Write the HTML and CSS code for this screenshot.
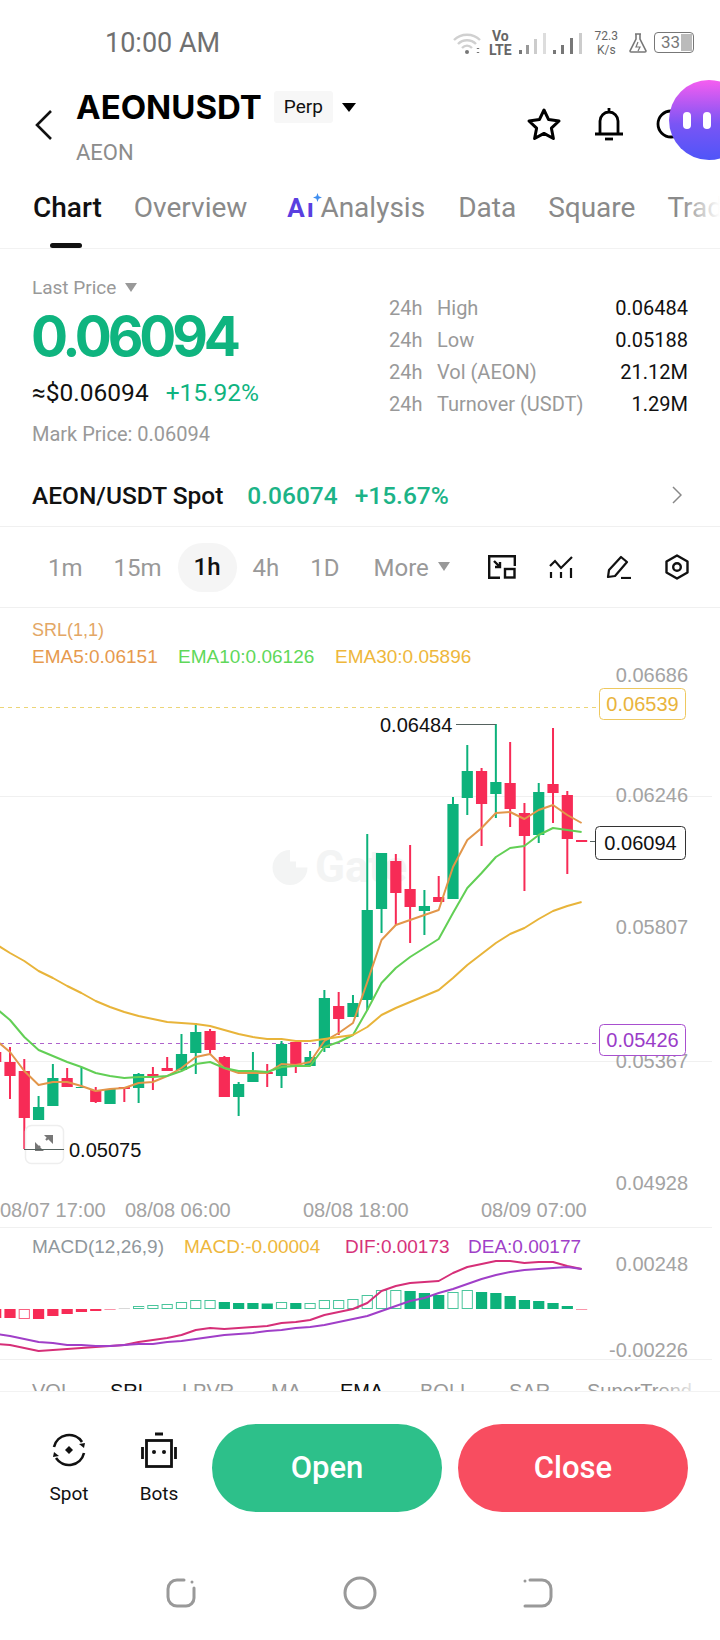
FILE: index.html
```html
<!DOCTYPE html>
<html>
<head>
    <meta charset="utf-8"/>
    <title>AEONUSDT Perp</title>
    <link rel="stylesheet" href="styles.css">
</head>

<body>
<div class="page">
    <div class="status">
        <span class="clock">10:00 AM</span>
        <div class="status-right">
            <svg class="wifi" width="28" height="24" viewBox="0 0 28 24" fill="none" stroke="#d0d0d0" stroke-width="2.4">
                <path d="M1 9c7-7 19-7 26 0"/>
                <path d="M5 13c5-5 13-5 18 0"/>
                <path d="M9 17c3-3 7-3 10 0"/>
                <circle cx="14" cy="21" r="2" fill="#777" stroke="none"/>
                <path d="M25 17v1M25 21v1" stroke="#777"/>
            </svg>
            <div class="volte"><span>Vo</span><span>LTE</span></div>
            <svg class="bars" width="64" height="22" viewBox="0 0 64 22">
                <rect x="0" y="18" width="3" height="4" fill="#777"/>
                <rect x="7" y="13" width="3" height="9" fill="#999"/>
                <rect x="15" y="7" width="3" height="15" fill="#ccc"/>
                <rect x="24" y="1" width="3" height="21" fill="#ddd"/>
                <rect x="34" y="18" width="3" height="4" fill="#777"/>
                <rect x="42" y="13" width="3" height="9" fill="#777"/>
                <rect x="51" y="6" width="3" height="16" fill="#777"/>
                <rect x="60" y="1" width="3" height="21" fill="#ccc"/>
            </svg>
            <div class="speed"><span>72.3</span><span>K/s</span></div>
            <svg class="flask" width="18" height="20" viewBox="0 0 18 20" fill="none" stroke="#777" stroke-width="1.6">
                <path d="M6 1h6M7 1v5L1 18a1 1 0 0 0 1 1h14a1 1 0 0 0 1-1L11 6V1"/>
                <path d="M9 9l-2 5h4l-2 4" stroke-width="1.2"/>
            </svg>
            <div class="battery"><span class="battery-num">33</span><span class="battery-fill"></span></div>
        </div>
    </div>

    <div class="header">
        <svg class="back" width="18" height="30" viewBox="0 0 18 30" fill="none" stroke="#111" stroke-width="2.6">
            <path d="M16 1L2 15l14 14"/>
        </svg>
        <div class="title-box">
            <div class="title-row">
                <span class="symbol">AEONUSDT</span>
                <span class="chip">Perp</span>
                <span class="caret caret-black"></span>
            </div>
            <div class="coin">AEON</div>
        </div>
        <div class="header-icons">
            <svg width="36" height="34" viewBox="0 0 36 34" fill="none" stroke="#000" stroke-width="3" stroke-linejoin="round">
                <path d="M18 3l4.6 9.6 10.4 1.4-7.6 7.2 2 10.3L18 26.4 8.600 31.500l2-10.300L3 14l10.400-1.400z"/>
            </svg>
            <svg width="30" height="34" viewBox="0 0 30 34" fill="none" stroke="#000" stroke-width="2.800">
                <path d="M15 1v3M6 27V14a9 9 0 0 1 18 0v13M1 27h28"/>
                <path d="M11 32h8"/>
            </svg>
            <svg width="30" height="30" viewBox="0 0 30 30" fill="none" stroke="#000" stroke-width="2.800">
                <circle cx="15" cy="15" r="13"/>
            </svg>
        </div>
    </div>
    <div class="bubble"><span></span><span></span></div>

    <div class="tabs">
        <span class="tab tab-on">Chart</span>
        <span class="tab">Overview</span>
        <span class="tab tab-ai">
            <span class="ai-mark">A<span class="ai-i">ı</span>
                <svg class="ai-star" width="9" height="9" viewBox="0 0 10 10"><path d="M5 0l1.300 3.700L10 5 6.300 6.300 5 10 3.700 6.300 0 5l3.700-1.300z" fill="#3f8ef0"/></svg>
            </span>
            Analysis
        </span>
        <span class="tab">Data</span>
        <span class="tab">Square</span>
        <span class="tab">Trade</span>
        <span class="tab-line"></span>
        <span class="tab-fade"></span>
    </div>

    <div class="quote">
        <div class="quote-left">
            <div class="last-label">Last Price <span class="caret caret-grey"></span></div>
            <div class="big-price">0.06094</div>
            <div class="usd-row"><span class="usd">≈$0.06094</span><span class="green">+15.92%</span></div>
            <div class="mark">Mark Price: 0.06094</div>
        </div>
        <div class="stats">
            <span class="stat-k">24h</span><span class="stat-n">High</span><span class="stat-v">0.06484</span>
            <span class="stat-k">24h</span><span class="stat-n">Low</span><span class="stat-v">0.05188</span>
            <span class="stat-k">24h</span><span class="stat-n">Vol (AEON)</span><span class="stat-v">21.12M</span>
            <span class="stat-k">24h</span><span class="stat-n">Turnover (USDT)</span><span class="stat-v">1.29M</span>
        </div>
    </div>

    <div class="spot-row">
        <span class="spot-name">AEON/USDT Spot</span>
        <span class="spot-price">0.06074</span>
        <span class="spot-price">+15.67%</span>
        <svg class="spot-arrow" width="10" height="18" viewBox="0 0 10 18" fill="none" stroke="#888" stroke-width="1.500">
            <path d="M1 1l8 8-8 8"/>
        </svg>
    </div>

    <div class="intervals">
        <span class="iv iv-1m">1m</span>
        <span class="iv iv-15m">15m</span>
        <span class="iv iv-on">1h</span>
        <span class="iv iv-4h">4h</span>
        <span class="iv iv-1d">1D</span>
        <span class="iv iv-more">More <span class="caret caret-grey"></span></span>
        <div class="tools">
            <svg width="28" height="24" viewBox="0 0 28 24" fill="none" stroke="#111" stroke-width="2.400">
                <path d="M12 22.800H1.200V1.200h25.600V11"/>
                <path d="M6 6l6 6M12 7v5H7"/>
                <rect x="17" y="14" width="9.500" height="8.500"/>
            </svg>
            <svg width="24" height="22" viewBox="0 0 24 22" fill="none" stroke="#111" stroke-width="2.200">
                <path d="M1 10l5-5 6 7L23 1"/>
                <path d="M2 16v6M12 16v6M22 12v10"/>
            </svg>
            <svg width="26" height="24" viewBox="0 0 26 24" fill="none" stroke="#111" stroke-width="2.200" stroke-linejoin="round">
                <path d="M3 15L15 2l6 5L9 21l-7 1z"/>
                <path d="M15 23h10"/>
            </svg>
            <svg width="24" height="26" viewBox="0 0 24 26" fill="none" stroke="#111" stroke-width="2.400" stroke-linejoin="round">
                <path d="M12 1.500l10.500 6v11l-10.500 6-10.500-6v-11z"/>
                <circle cx="12" cy="13" r="3.800"/>
            </svg>
        </div>
    </div>

    <div class="chart">
        <svg class="chart-svg" width="720" height="784" viewBox="0 608 720 784">
            <defs>
                <linearGradient id="fade-right">
                    <stop offset="0" stop-color="#fff" stop-opacity="0"/>
                    <stop offset="1" stop-color="#fff"/>
                </linearGradient>
            </defs>

            <!-- grid -->
            <g class="grid">
                <line x1="0" y1="796.500" x2="712" y2="796.500"/>
                <line x1="0" y1="1061.500" x2="712" y2="1061.500"/>
                <line x1="0" y1="1227.500" x2="712" y2="1227.500"/>
                <line x1="0" y1="1359.500" x2="712" y2="1359.500"/>
            </g>

            <!-- watermark -->
            <g class="watermark">
                <path d="M290 850a17.500 17.500 0 1 0 17.500 17.500H296v-6h-6z"/>
                <text x="315" y="882">Gate</text>
            </g>

            <text class="legend srl" x="32" y="636">SRL(1,1)</text>
            <text class="legend ema5" x="32" y="663">EMA5:0.06151</text>
            <text class="legend ema10" x="178" y="663">EMA10:0.06126</text>
            <text class="legend ema30" x="335" y="663">EMA30:0.05896</text>

            <g class="axis">
                <text x="688" y="682">0.06686</text>
                <text x="688" y="802">0.06246</text>
                <text x="688" y="934">0.05807</text>
                <text x="688" y="1068">0.05367</text>
                <text x="688" y="1190">0.04928</text>
                <text x="688" y="1271">0.00248</text>
                <text x="688" y="1357">-0.00226</text>
            </g>

            <line class="dash-gold" x1="0" y1="707.500" x2="599" y2="707.500"/>
            <line class="dash-purple" x1="0" y1="1043.500" x2="599" y2="1043.500"/>

            <g id="candles"></g>
            <g id="macd"></g>
            <g id="lines"></g>

            <!-- high and low -->
            <line class="mark-line" x1="456" y1="724.500" x2="496" y2="724.500"/>
            <text class="mark-text" x="380" y="732">0.06484</text>

            <rect class="expand" x="25.500" y="1125.500" width="38" height="38" rx="6"/>
            <path class="expand-arrow" d="M40 1146l-3.500 3.500M50 1136l-4 4"/>
            <path class="expand-head" d="M53 1135v9l-9-9zM35 1151v-9l9 9z"/>
            <line class="mark-line" x1="24" y1="1149.500" x2="64" y2="1149.500"/>
            <text class="mark-text" x="69" y="1157">0.05075</text>

            <!-- price tags -->
            <rect class="tag tag-gold" x="599.500" y="688.500" width="86" height="31" rx="4"/>
            <text class="tag-text gold" x="642.500" y="711">0.06539</text>
            <rect class="tag tag-purple" x="599.500" y="1024.500" width="86" height="31" rx="4"/>
            <text class="tag-text purple" x="642.500" y="1047">0.05426</text>
            <line class="mark-line" x1="590" y1="841.500" x2="595" y2="841.500"/>
            <rect class="tag tag-black" x="595.500" y="826.500" width="90" height="33" rx="4"/>
            <text class="tag-text black" x="640.500" y="850">0.06094</text>

            <g class="dates">
                <text x="0" y="1217">08/07 17:00</text>
                <text x="125" y="1217">08/08 06:00</text>
                <text x="303" y="1217">08/08 18:00</text>
                <text x="481" y="1217">08/09 07:00</text>
            </g>

            <text class="legend macd-name" x="32" y="1253">MACD(12,26,9)</text>
            <text class="legend macd-val" x="184" y="1253">MACD:-0.00004</text>
            <text class="legend dif-val" x="345" y="1253">DIF:0.00173</text>
            <text class="legend dea-val" x="468" y="1253">DEA:0.00177</text>

            <g class="ind">
                <text x="32" y="1398">VOL</text>
                <text class="ind-on" x="110" y="1398">SRL</text>
                <text x="182" y="1398">LPVR</text>
                <text x="271" y="1398">MA</text>
                <text class="ind-on" x="340" y="1398">EMA</text>
                <text x="420" y="1398">BOLL</text>
                <text x="509" y="1398">SAR</text>
                <text x="587" y="1398">SuperTrend</text>
            </g>
            <rect x="655" y="1375" width="50" height="17" fill="url(#fade-right)"/>
            <rect x="705" y="1375" width="15" height="17" fill="#fff"/>
        </svg>
    </div>

    <div class="actions">
        <div class="act">
            <svg width="36" height="36" viewBox="0 0 36 36" fill="none" stroke="#111" stroke-width="2.600">
                <path d="M3 15A15.500 15.500 0 0 1 31 10"/>
                <path d="M33 21A15.500 15.500 0 0 1 5 26"/>
                <path d="M34 11l-6 1 5 4zM2 25l6-1-5-4z" fill="#111" stroke="none"/>
                <path d="M18 14l4 4-4 4-4-4z" fill="#111" stroke="none"/>
            </svg>
            <span>Spot</span>
        </div>
        <div class="act">
            <svg width="36" height="36" viewBox="0 0 36 36" fill="none" stroke="#111" stroke-width="2.800">
                <path d="M14 2h8" stroke-width="3"/>
                <rect x="5.500" y="8.500" width="25" height="26"/>
                <path d="M1.500 15v12M34.500 15v12"/>
                <circle cx="13" cy="20" r="2" fill="#111" stroke="none"/>
                <circle cx="23" cy="20" r="2" fill="#111" stroke="none"/>
            </svg>
            <span>Bots</span>
        </div>
        <div class="btn btn-open">Open</div>
        <div class="btn btn-close">Close</div>
    </div>

    <div class="nav">
        <svg width="32" height="30" viewBox="0 0 32 30" fill="none" stroke="#999" stroke-width="3" stroke-linecap="round">
            <path d="M19 2h-7a9 9 0 0 0-9 9v8a9 9 0 0 0 9 9h9a8 8 0 0 0 8-8v-10"/>
            <circle cx="27" cy="4" r="1.500" fill="#999" stroke="none"/>
        </svg>
        <svg width="34" height="34" viewBox="0 0 34 34" fill="none" stroke="#999" stroke-width="3">
            <circle cx="17" cy="17" r="15"/>
        </svg>
        <svg width="30" height="30" viewBox="0 0 30 30" fill="none" stroke="#999" stroke-width="3" stroke-linecap="round">
            <path d="M7 2h12a9 9 0 0 1 9 9v8a9 9 0 0 1-9 9H2"/>
            <circle cx="2" cy="3" r="1.500" fill="#999" stroke="none"/>
        </svg>
    </div>
</div>
<script src="chart.js"></script>
</body>
</html>
```

FILE: styles.css
```css
* {
    margin: 0;
    padding: 0;
    box-sizing: border-box;
}
body {
    background: #fff;
    font-family: Roboto, "Liberation Sans", sans-serif;
    color: #111;
}
.page {
    position: relative;
    width: 720px;
    height: 1640px;
    overflow: hidden;
}

/* status bar */
.status {
    display: flex;
    align-items: center;
    justify-content: space-between;
    height: 82px;
    padding: 3px 26px 0 105px;
}
.clock {
    font-size: 27px;
    color: #707070;
}
.status-right {
    display: flex;
    align-items: center;
    gap: 7px;
}
.wifi {
    margin-right: 1px;
}
.volte, .speed {
    display: flex;
    flex-direction: column;
    align-items: center;
    color: #666;
    line-height: 14px;
}
.volte {
    font-size: 14px;
    font-weight: 700;
}
.speed {
    font-size: 12px;
    margin: 0 4px 0 5px;
}
.battery {
    position: relative;
    width: 40px;
    height: 21px;
    border: 1.5px solid #777;
    border-radius: 4px;
    font-size: 17px;
    line-height: 18px;
    color: #777;
    padding-left: 6px;
}
.battery-fill {
    position: absolute;
    top: 1px;
    bottom: 1px;
    right: 1px;
    width: 11px;
    background: #bbb;
}
.battery-num {
    position: relative;
    z-index: 1;
}

/* header */
.header {
    display: flex;
    height: 93px;
    padding-left: 35px;
}
.back {
    margin-top: 28px;
}
.title-box {
    margin-left: 23px;
}
.title-row {
    display: flex;
    align-items: center;
    height: 44px;
    margin-top: 3px;
}
.symbol {
    font-family: Inter, Roboto, sans-serif;
    font-size: 33px;
    font-weight: 700;
    color: #000;
}
.chip {
    margin-left: 12px;
    width: 59px;
    height: 32px;
    background: #f7f7f7;
    border-radius: 3px;
    font-size: 19px;
    line-height: 32px;
    text-align: center;
}
.caret {
    display: inline-block;
    width: 0;
    height: 0;
    border-left: 6px solid transparent;
    border-right: 6px solid transparent;
    border-top: 9px solid #999;
}
.caret-black {
    margin-left: 9px;
    border-left-width: 7px;
    border-right-width: 7px;
    border-top-color: #000;
}
.coin {
    margin-top: 11px;
    font-size: 22px;
    color: #8c8c8c;
}
.header-icons {
    display: flex;
    align-items: center;
    gap: 32px;
    position: absolute;
    top: 107px;
    left: 526px;
}
.bubble {
    position: absolute;
    top: 80px;
    left: 669px;
    width: 80px;
    height: 80px;
    border-radius: 40px;
    background: linear-gradient(#f65df0, #7a55f5 55%, #4f55f8);
    display: flex;
    align-items: center;
    gap: 12px;
    padding-left: 14px;
}
.bubble span {
    width: 8px;
    height: 17px;
    border-radius: 4px;
    background: #fff;
}

/* tabs */
.tabs {
    position: relative;
    display: flex;
    align-items: center;
    gap: 32px;
    height: 74px;
    padding: 0 0 8px 33px;
    border-bottom: 1px solid #f2f2f2;
    overflow: hidden;
}
.tab {
    font-size: 28px;
    color: #8a8a8a;
    white-space: nowrap;
    flex: none;
}
.tab-on {
    color: #111;
    font-weight: 500;
}
.tab-ai {
    margin-left: 8px;
    margin-right: 1px;
}
.ai-mark {
    position: relative;
    font-size: 26px;
    font-weight: 700;
    color: #5a3fe0;
}
.ai-i {
    margin-left: 2px;
}
.ai-star {
    position: absolute;
    top: 0;
    right: -2px;
}
.tab-line {
    position: absolute;
    left: 50px;
    bottom: 0;
    width: 32px;
    height: 5px;
    border-radius: 3px;
    background: #111;
}
.tab-fade {
    position: absolute;
    right: 0;
    top: 0;
    width: 40px;
    height: 72px;
    background: linear-gradient(90deg, rgba(255,255,255,0), #fff);
}

/* price block */
.quote {
    display: flex;
    height: 198px;
    padding: 0 32px;
}
.last-label {
    margin-top: 28px;
    font-size: 19px;
    line-height: 22px;
    color: #999;
}
.last-label .caret {
    margin-left: 4px;
    vertical-align: 2px;
}
.big-price {
    margin: 5px 0 0 -1px;
    font-family: Inter, Roboto, sans-serif;
    font-size: 55px;
    line-height: 64px;
    font-weight: 700;
    letter-spacing: -4.200px;
    color: #0fb47f;
}
.usd-row {
    display: flex;
    gap: 17px;
    margin-top: 11px;
    font-size: 24.500px;
    line-height: 28px;
}
.green {
    color: #0fb47f;
}
.mark {
    margin-top: 15px;
    font-size: 20px;
    line-height: 24px;
    color: #999;
}
.stats {
    display: grid;
    grid-template-columns: 48px 1fr auto;
    grid-auto-rows: 32px;
    align-items: center;
    align-content: start;
    width: 299px;
    margin-left: auto;
    padding-top: 43px;
    font-size: 20px;
}
.stat-k, .stat-n {
    color: #999;
}
.stat-v {
    text-align: right;
    color: #111;
}

/* spot row */
.spot-row {
    display: flex;
    align-items: center;
    height: 80px;
    padding: 17px 38px 0 32px;
    border-bottom: 1px solid #f0f0f0;
    font-size: 24.500px;
}
.spot-name {
    font-weight: 500;
    margin-right: 24px;
}
.spot-price {
    color: #1cb387;
    font-weight: 500;
    margin-right: 17px;
}
.spot-arrow {
    margin-left: auto;
}

/* interval row */
.intervals {
    position: relative;
    height: 81px;
    border-bottom: 1px solid #f0f0f0;
    display: flex;
    align-items: center;
    font-size: 24px;
    color: #999;
    padding: 1px 0 0 48px;
}
.iv {
    flex: none;
}
.iv-15m {
    margin-left: 31px;
}
.iv-on {
    margin-left: 16px;
    width: 59px;
    height: 49px;
    border-radius: 25px;
    background: #f5f5f5;
    color: #111;
    font-weight: 500;
    line-height: 49px;
    text-align: center;
}
.iv-4h {
    margin-left: 16px;
}
.iv-1d {
    margin-left: 31px;
}
.iv-more {
    margin-left: 34px;
}
.iv-more .caret {
    margin-left: 3px;
    vertical-align: 5px;
}
.tools {
    position: absolute;
    left: 488px;
    top: 0;
    bottom: 0;
    display: flex;
    align-items: center;
    gap: 33px;
}

/* chart */
.chart {
    height: 784px;
}
.chart-svg {
    display: block;
    font-family: "Liberation Sans", Arial, sans-serif;
}
.grid line {
    stroke: #f0f0f0;
    stroke-width: 1;
}
.watermark {
    fill: #f3f4f4;
}
.watermark text {
    font-size: 44px;
    font-weight: 700;
    font-family: Roboto, sans-serif;
}
.legend {
    font-size: 19px;
}
.srl {
    fill: #e3a765;
    font-size: 18px;
}
.ema5 {
    fill: #e69a4e;
}
.ema10 {
    fill: #5fd85a;
}
.ema30, .macd-val {
    fill: #eeb73b;
}
.macd-name {
    fill: #8f979c;
}
.dif-val {
    fill: #d6327a;
}
.dea-val {
    fill: #a03fc8;
}
.axis text {
    fill: #a3a3a3;
    font-size: 20px;
    text-anchor: end;
}
.dates text {
    fill: #a3a3a3;
    font-size: 20px;
}
.dash-gold {
    stroke: #ecd576;
    stroke-dasharray: 4 4;
}
.dash-purple {
    stroke: #ae63cc;
    stroke-dasharray: 4 4;
}
.mark-line {
    stroke: #55625f;
    stroke-width: 1;
}
.mark-text {
    font-size: 20px;
    fill: #111;
}
.expand {
    fill: rgba(255,255,255,0.6);
    stroke: #eeeeee;
    stroke-width: 1.500;
}
.expand-arrow {
    fill: none;
    stroke: #777;
    stroke-width: 2.200;
}
.expand-head {
    fill: #777;
}
.tag {
    fill: #fff;
    stroke-width: 1;
}
.tag-gold {
    stroke: #eec85f;
}
.tag-purple {
    stroke: #a84fcf;
}
.tag-black {
    stroke: #333;
}
.tag-text {
    font-size: 20px;
    text-anchor: middle;
}
.gold {
    fill: #e9b43c;
}
.purple {
    fill: #9a3cc8;
}
.black {
    fill: #111;
}
.ind text {
    fill: #999;
    font-size: 20px;
}
.ind .ind-on {
    fill: #111;
}

/* bottom actions */
.actions {
    position: relative;
    z-index: 1;
    height: 168px;
    margin-top: -1px;
    background: #fff;
    border-top: 1px solid #f2f2f2;
    display: flex;
    padding: 32px 32px 0 0;
}
.act {
    display: flex;
    flex-direction: column;
    align-items: center;
    width: 90px;
    height: 88px;
    font-size: 19px;
    gap: 14px;
    padding-top: 8px;
}
.act:first-child {
    margin-left: 24px;
}
.btn {
    width: 230px;
    height: 88px;
    border-radius: 44px;
    color: #fff;
    font-size: 31px;
    font-weight: 500;
    line-height: 88px;
    text-align: center;
}
.btn-open {
    margin-left: 8px;
    background: #2dc08a;
}
.btn-close {
    margin-left: 16px;
    background: #f84d60;
}

/* nav bar */
.nav {
    display: flex;
    align-items: center;
    height: 68px;
    padding: 0 167px 0 165px;
    justify-content: space-between;
}
```

FILE: chart.js
```js
var NS = 'http://www.w3.org/2000/svg';
var GREEN = '#0db27b';
var RED = '#f72b56';

function xAt(i) {
    return 10 + 14.29 * i;
}

function add(parent, tag, attrs) {
    var el = document.createElementNS(NS, tag);
    for (var k in attrs) {
        el.setAttribute(k, attrs[k]);
    }
    parent.appendChild(el);
    return el;
}

// [wick top, wick bottom, body top, body bottom, up?]
var candles = [
    [1052, 1062, 1052, 1062, 0], [1047, 1099, 1062, 1076, 0], [1059, 1149, 1071, 1118, 0],
    [1096, 1120, 1107, 1120, 1], [1064, 1106, 1078, 1106, 1], [1068, 1087, 1078, 1087, 0],
    [1067, 1088, 1087, 1088, 1], [1087, 1103, 1090, 1102, 0], [1089, 1104, 1089, 1104, 1],
    [1087, 1102, 1087, 1089, 0], [1073, 1103, 1074, 1088, 1], [1067, 1090, 1074, 1077, 0],
    [1057, 1071, 1068, 1071, 0], [1034, 1070, 1054, 1070, 1], [1023, 1074, 1032, 1053, 1],
    [1029, 1055, 1031, 1050, 0], [1056, 1097, 1057, 1097, 0], [1082, 1116, 1084, 1097, 1],
    [1052, 1082, 1073, 1082, 1], [1064, 1087, 1072, 1074, 0], [1041, 1088, 1044, 1076, 1],
    [1042, 1073, 1042, 1066, 0], [1051, 1066, 1057, 1066, 1], [990, 1052, 998, 1048, 1],
    [992, 1035, 1006, 1019, 0], [995, 1017, 1003, 1017, 1], [834, 1010, 910, 1000, 1],
    [853, 933, 853, 909, 1], [854, 925, 861, 893, 0], [845, 943, 889, 907, 0],
    [890, 935, 906, 911, 1], [876, 902, 897, 902, 0], [797, 899, 804, 899, 1],
    [745, 815, 771, 798, 1], [768, 846, 771, 804, 0], [724, 818, 782, 794, 1],
    [742, 827, 783, 809, 0], [803, 891, 813, 836, 0], [783, 843, 792, 835, 1],
    [728, 823, 784, 793, 0], [791, 874, 795, 839, 0], [840, 842, 840, 842, 0]
];

var gCandles = document.getElementById('candles');
candles.forEach(function (c, n) {
    var x = xAt(n - 1);
    var col = c[4] ? GREEN : RED;
    add(gCandles, 'rect', { x: x - 1, y: c[0], width: 2, height: c[1] - c[0], fill: col });
    add(gCandles, 'rect', { x: x - 5.6, y: c[2], width: 11.2, height: c[3] - c[2], fill: col });
});

// one y per candle, first value is the off-screen candle
var series = [
    { color: '#e2964a', ys: [1040, 1052, 1071, 1085, 1082, 1082, 1086, 1091, 1089, 1088, 1083, 1082, 1076, 1068, 1057, 1054, 1068, 1073, 1073, 1073, 1064, 1065, 1062, 1041, 1033, 1023, 982, 940, 925, 920, 915, 910, 867, 840, 828, 813, 812, 819, 810, 805, 815, 823] },
    { color: '#62cf55', ys: [1008, 1020, 1037, 1050, 1056, 1062, 1067, 1073, 1076, 1078, 1077, 1077, 1076, 1071, 1064, 1062, 1068, 1071, 1071, 1072, 1067, 1066, 1066, 1047, 1042, 1035, 1010, 983, 968, 957, 948, 939, 913, 888, 873, 857, 848, 846, 835, 828, 830, 832] },
    { color: '#e8b43a', ys: [944, 953, 961, 971, 978, 986, 993, 1001, 1007, 1012, 1016, 1019, 1022, 1023, 1024, 1026, 1030, 1034, 1037, 1039, 1039, 1041, 1041, 1039, 1037, 1035, 1027, 1015, 1008, 1002, 996, 990, 978, 965, 954, 943, 934, 928, 919, 911, 906, 902] },
    { color: '#d62f78', ys: [1344, 1345, 1348, 1351, 1350, 1349, 1348, 1347, 1346, 1345, 1342, 1340, 1338, 1335, 1330, 1328, 1329, 1328, 1327, 1326, 1323, 1322, 1320, 1315, 1312, 1309, 1303, 1291, 1286, 1283, 1282, 1281, 1273, 1267, 1264, 1261, 1261, 1263, 1262, 1262, 1266, 1269] },
    { color: '#a03fc8', ys: [1334, 1336, 1339, 1342, 1343, 1345, 1345, 1346, 1346, 1345, 1344, 1344, 1342, 1341, 1339, 1337, 1335, 1334, 1333, 1331, 1330, 1328, 1327, 1325, 1322, 1319, 1316, 1311, 1306, 1301, 1298, 1293, 1289, 1284, 1279, 1275, 1272, 1270, 1269, 1268, 1267, 1269] }
];

var gLines = document.getElementById('lines');
series.forEach(function (s) {
    var pts = s.ys.map(function (y, n) {
        return xAt(n - 1).toFixed(1) + ',' + y;
    });
    add(gLines, 'polyline', { points: pts.join(' '), fill: 'none', stroke: s.color, 'stroke-width': 2, 'stroke-linejoin': 'round' });
});

// macd bars: height, negative goes under the zero line, h marks a hollow bar
var bars = [
    -9, -9, '-10h', -10, -7, -5, -3, -2, -1, 0,
    '3h', '4h', '5h', '7h', '9h', '9h', 7, 6, 6, 5.5, '7h', 6, '6h', '9h', '9h', '10h',
    '14h', '19h', '19h', 18, 16, 14, '17h', '19h', 17, 16, 13, 9, 8, 6, 3, -1
];
var ZERO = 1309;
var gMacd = document.getElementById('macd');
bars.forEach(function (b, n) {
    var x = xAt(n - 1);
    var hollow = typeof b === 'string';
    var v = parseFloat(b);
    if (v === 0) {
        add(gMacd, 'rect', { x: x - 5.6, y: ZERO - 1, width: 11.2, height: 1, fill: '#d8d8d8' });
        return;
    }
    var col = v > 0 ? GREEN : RED;
    var h = Math.abs(v);
    var top = v > 0 ? ZERO - h : ZERO;
    if (hollow) {
        add(gMacd, 'rect', { x: x - 5.1, y: top + 0.5, width: 10.2, height: h - 1, fill: '#fff', stroke: col, 'stroke-opacity': 0.75, 'stroke-width': 1 });
    } else {
        add(gMacd, 'rect', { x: x - 5.6, y: top, width: 11.2, height: h, fill: col, 'fill-opacity': h < 2 ? 0.5 : 1 });
    }
});
```
